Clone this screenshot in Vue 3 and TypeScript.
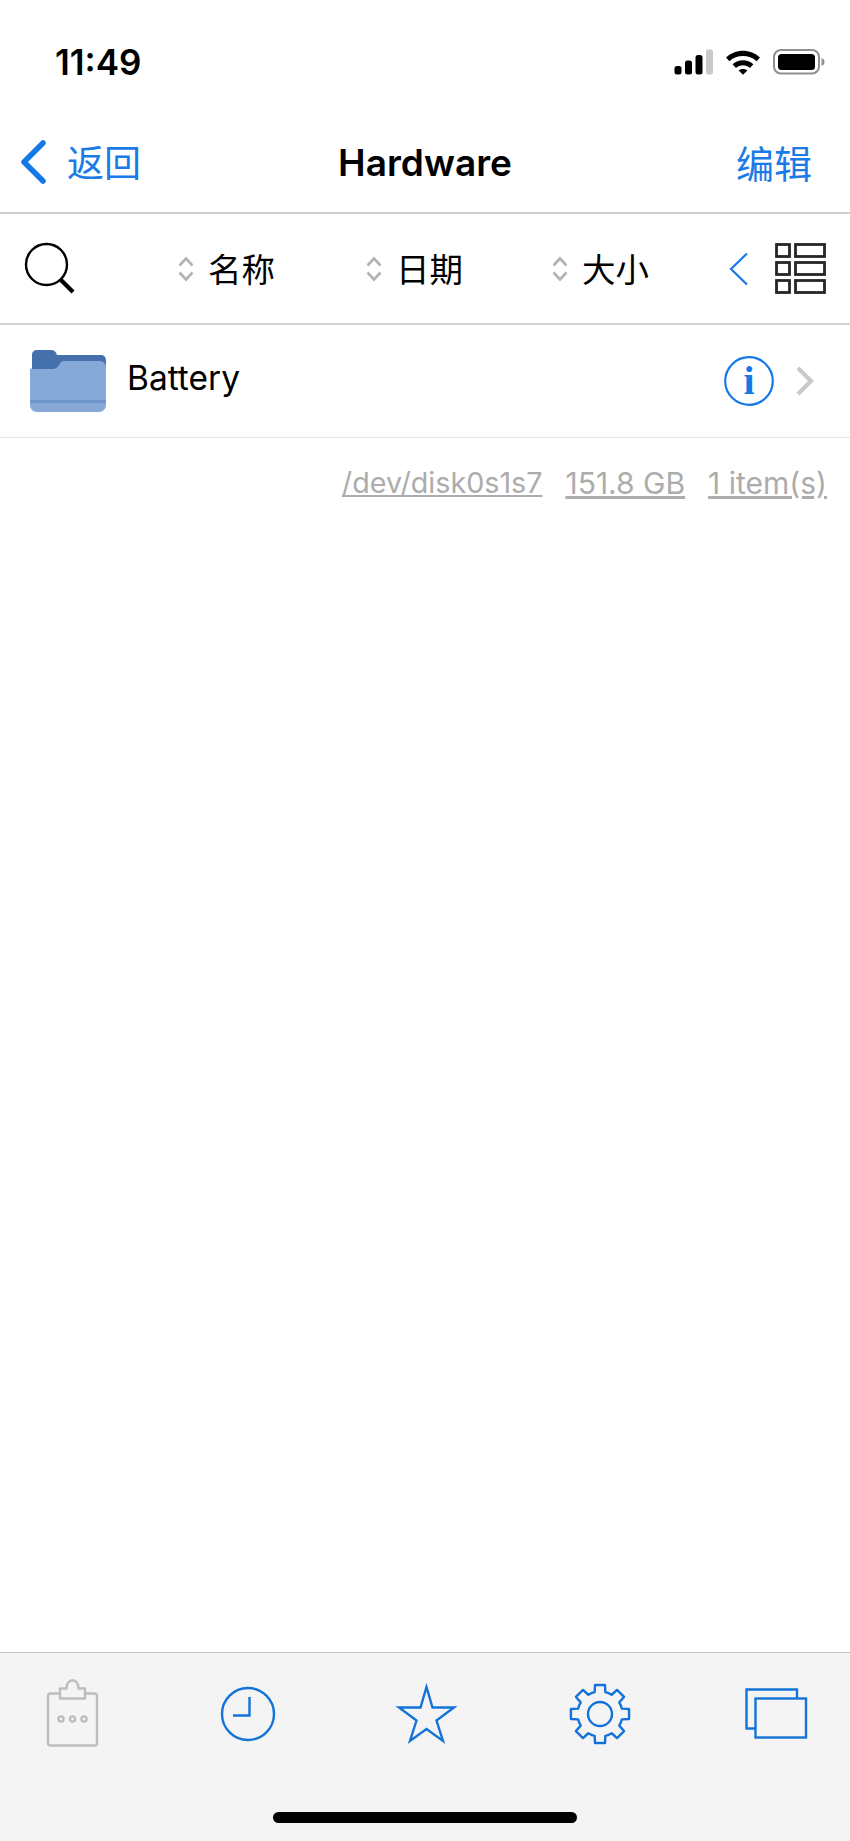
<script setup lang="ts">
const sorts: string[] = ['名称', '日期', '大小']
const meta: string[] = ['/dev/disk0s1s7', '151.8 GB', '1 item(s)']

function gearPath(cx: number, cy: number, outer: number, root: number): string {
  const pt = (r: number, a: number): string =>
    `${(cx + r * Math.cos(a)).toFixed(2)} ${(cy + r * Math.sin(a)).toFixed(2)}`
  let d = ''
  for (let i = 0; i < 8; i++) {
    const a = (i * Math.PI) / 4 - Math.PI / 2
    d += `${i === 0 ? 'M' : 'A' + root + ' ' + root + ' 0 0 1'} ${pt(root, a - 0.24)} `
    d += `L ${pt(outer, a - 0.17)} L ${pt(outer, a + 0.17)} L ${pt(root, a + 0.24)} `
  }
  const first = -Math.PI / 2 - 0.24
  return `${d}A${root} ${root} 0 0 1 ${pt(root, first)} Z`
}
const gear = gearPath(38, 39, 29.5, 22.5)
</script>

<template>
  <div class="screen">
    <header class="status">
      <span class="time">11:49</span>
      <div class="status-icons">
        <svg class="signal" width="40" height="26" viewBox="0 0 40 26">
          <rect x="0.5" y="17" width="7" height="8.5" rx="2.5" fill="#000" />
          <rect x="11" y="11.5" width="7" height="14" rx="2.5" fill="#000" />
          <rect x="21.5" y="6" width="7" height="19.5" rx="2.5" fill="#000" />
          <rect x="32" y="0.5" width="7" height="25" rx="2.5" fill="#c9c9c9" />
        </svg>
        <svg class="wifi" width="36" height="26" viewBox="0 0 36 26">
          <path d="M1 8.5C10.5 -0.5 25.5 -0.5 35 8.5L31.6 12.2C24 5.4 12 5.4 4.4 12.2Z" fill="#000" />
          <path d="M7.6 15.2C13.5 9.8 22.5 9.8 28.4 15.2L25 18.9C20.8 15.5 15.2 15.5 11 18.9Z" fill="#000" />
          <path d="M13.6 21.4C16 19.4 20 19.4 22.4 21.4L18 25.8Z" fill="#000" />
        </svg>
        <svg class="battery" width="52" height="26" viewBox="0 0 52 26">
          <rect x="1" y="1" width="45" height="23.5" rx="7" fill="none" stroke="#8f8f8f" stroke-width="2" />
          <rect x="5" y="5" width="37" height="16" rx="3.5" fill="#000" />
          <path d="M48.5 9C50.5 9.8 51.5 11 51.5 13C51.5 15 50.5 16.2 48.5 17Z" fill="#8f8f8f" />
        </svg>
      </div>
    </header>

    <nav class="nav">
      <div class="back">
        <svg width="28" height="46" viewBox="0 0 28 46">
          <path d="M24 4L5 23L24 42" fill="none" stroke="#1479e6" stroke-width="5.5" stroke-linecap="round" stroke-linejoin="round" />
        </svg>
        <span>返回</span>
      </div>
      <h1 class="title">Hardware</h1>
      <div class="edit"><span>编辑</span></div>
    </nav>

    <section class="toolbar">
      <svg class="search" width="52" height="54" viewBox="0 0 52 54">
        <circle cx="22.5" cy="22.5" r="20.5" fill="none" stroke="#000" stroke-width="2.4" />
        <path d="M36 37L49 50" fill="none" stroke="#000" stroke-width="4.2" />
      </svg>
      <div v-for="s in sorts" :key="s" class="sort">
        <svg width="16" height="28" viewBox="0 0 16 28">
          <path d="M1.5 10.5L8 3.5L14.5 10.5M1.5 17.5L8 24.5L14.5 17.5" fill="none" stroke="#b2b2b2" stroke-width="2.6" />
        </svg>
        <span>{{ s }}</span>
      </div>
      <svg class="less" width="20" height="34" viewBox="0 0 20 34">
        <path d="M18 1.5L2 17L18 32.5" fill="none" stroke="#1479e6" stroke-width="2.2" />
      </svg>
      <svg class="layout" width="51" height="51" viewBox="0 0 51 51">
        <g fill="none" stroke="#262626" stroke-width="2.8">
          <rect x="1.5" y="1.5" width="13" height="12" />
          <rect x="1.5" y="19.500" width="13" height="12" />
          <rect x="1.5" y="37.500" width="13" height="12" />
          <rect x="20.5" y="1.5" width="29" height="12" />
          <rect x="20.5" y="19.500" width="29" height="12" />
          <rect x="20.5" y="37.500" width="29" height="12" />
        </g>
      </svg>
    </section>

    <section class="row">
      <svg class="folder" width="78" height="64" viewBox="0 0 78 64">
        <path d="M3 6C3 3 5 1 8 1H22C25 1 27 2.5 28 6H72C75 6 77 8 77 12V24H3Z" fill="#4470ac" />
        <path d="M1 20C1 19 2 20 6 20H24C28 20 29 17 31 14.5C32 13 33 12 36 12H70C74 12 77 14.500 77 18V56C77 60 74 63 70 63H8C4 63 1 60 1 56Z" fill="#86a9d8" />
        <rect x="1" y="51" width="76" height="3" fill="#6f96cc" />
      </svg>
      <span class="name">Battery</span>
      <svg class="info" width="50" height="50" viewBox="0 0 50 50">
        <circle cx="25" cy="25" r="23.8" fill="none" stroke="#1479e6" stroke-width="2.2" />
        <text x="25" y="38" text-anchor="middle" class="info-i">i</text>
      </svg>
      <svg class="more" width="18" height="30" viewBox="0 0 18 30">
        <path d="M2 2L15 15L2 28" fill="none" stroke="#c9c9c9" stroke-width="4.2" />
      </svg>
    </section>

    <div class="meta">
      <span v-for="m in meta" :key="m">{{ m }}</span>
    </div>

    <div class="spacer"></div>

    <footer class="tabbar">
      <div class="tabs">
        <svg width="76" height="76" viewBox="0 0 76 76">
          <g fill="none" stroke="#bdbdbd" stroke-width="2.4">
            <path d="M26 18.500H16.500C15 18.500 14 19.500 14 21V68C14 69.500 15 70.500 16.500 70.500H60.500C62 70.500 63 69.500 63 68V21C63 19.500 62 18.500 60.500 18.500H51" />
            <path d="M26 23.500V13.500H32.500C32.500 2.500 44.500 2.500 44.500 13.500H51V23.500Z" stroke-linejoin="round" />
            <circle cx="27" cy="44" r="2.600" />
            <circle cx="38.500" cy="44" r="2.600" />
            <circle cx="50" cy="44" r="2.600" />
          </g>
        </svg>
        <svg width="76" height="76" viewBox="0 0 76 76">
          <g fill="none" stroke="#1473d6" stroke-width="2.4">
            <circle cx="38" cy="39" r="26" />
            <path d="M39.500 22V40.500H23" />
          </g>
        </svg>
        <svg width="76" height="76" viewBox="0 0 76 76">
          <path d="M40.500 12L46.500 32.500H68L50.500 45.500L57 66L40.500 54L24 66L30.500 45.500L13 32.500H34.500Z" fill="none" stroke="#1473d6" stroke-width="2.400" />
        </svg>
        <svg width="76" height="76" viewBox="0 0 76 76">
          <g fill="none" stroke="#1473d6" stroke-width="2.400" stroke-linejoin="round">
            <path :d="gear" />
            <circle cx="38" cy="39" r="12" />
          </g>
        </svg>
        <svg width="76" height="76" viewBox="0 0 76 76">
          <g fill="none" stroke="#1473d6" stroke-width="2.400">
            <path d="M17 53.500H8.500V14.500H59V23" />
            <rect x="17.500" y="23.500" width="50.500" height="39" />
          </g>
        </svg>
      </div>
      <div class="home"></div>
    </footer>
  </div>
</template>

<style>
html, body { margin: 0; background: #fff; }
</style>

<style scoped>
.screen {
  width: 850px;
  height: 1841px;
  display: flex;
  flex-direction: column;
  background: #fff;
  color: #000;
  font-family: Inter, "Noto Sans CJK SC", sans-serif;
  overflow: hidden;
}
.status {
  height: 100px;
  box-sizing: border-box;
  padding: 0 25px 0 55px;
  display: flex;
  justify-content: space-between;
  align-items: flex-start;
}
.time {
  margin-top: 43px;
  font-size: 35px;
  line-height: 38px;
  font-weight: 600;
}
.status-icons {
  margin-top: 49px;
  display: flex;
  align-items: center;
}
.signal { margin-right: 11px; }
.wifi { margin-right: 12px; }
.nav {
  height: 114px;
  box-sizing: border-box;
  border-bottom: 2px solid #cfcfcf;
  padding: 12px 38px 0 19px;
  display: grid;
  grid-template-columns: 1fr auto 1fr;
  align-items: center;
  color: #1a7be6;
  font-size: 37px;
  font-family: "Noto Sans CJK SC", sans-serif;
}
.back {
  display: flex;
  align-items: center;
  gap: 20px;
}
.back svg { margin-top: 0; }
.back span { margin-top: -2px; }
.title {
  margin: 0 0 0 19px;
  font-family: Inter, sans-serif;
  font-size: 37px;
  font-weight: 600;
  color: #000;
}
.edit { text-align: right; font-size: 38px; margin-top: -2px; }
.toolbar {
  height: 111px;
  box-sizing: border-box;
  border-bottom: 2px solid #d4d4d4;
  padding-left: 24px;
  display: flex;
  align-items: center;
  font-family: "Noto Sans CJK SC", sans-serif;
  font-size: 33.5px;
}
.search { margin-right: 102px; }
.sort {
  display: flex;
  align-items: center;
  gap: 14px;
}
.sort span { margin-top: -3px; }
.sort:nth-of-type(1) { width: 188px; }
.sort:nth-of-type(2) { width: 186px; }
.sort:nth-of-type(3) { width: 177px; }
.less { margin-right: 26px; }
.row {
  height: 113px;
  box-sizing: border-box;
  border-bottom: 1px solid #e6e6e6;
  padding-left: 29px;
  display: flex;
  align-items: center;
}
.folder { margin-right: 20px; }
.name {
  flex: 1;
  font-size: 33.5px;
  margin-top: -7px;
}
.info { margin-right: 22px; }
.more { margin-right: 36px; }
.info-i {
  font-family: "Liberation Serif", serif;
  font-weight: 700;
  font-size: 40px;
  fill: #1479e6;
}
.meta {
  padding: 25px 23px 0 0;
  display: flex;
  justify-content: flex-end;
  gap: 23px;
  font-size: 30px;
  line-height: 40px;
  color: #acacac;
}
.meta span { text-decoration: underline; }
.meta span:first-child { font-size: 28.7px; }
.spacer { flex: 1; }
.tabbar {
  height: 189px;
  box-sizing: border-box;
  border-top: 1px solid #c4c4c4;
  background: #f5f4f5;
  display: flex;
  flex-direction: column;
}
.tabs {
  padding: 22px 36px 0 34px;
  display: flex;
  justify-content: space-between;
}
.home {
  width: 304px;
  height: 11px;
  margin: 61px auto 0;
  border-radius: 6px;
  background: #000;
}
</style>
